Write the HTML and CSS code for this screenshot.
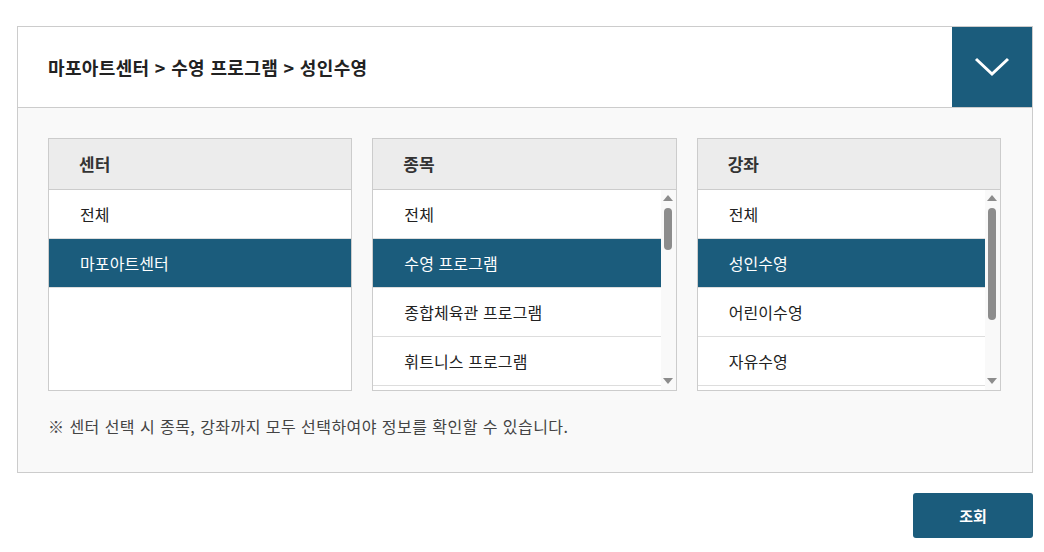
FILE: index.html
```html
<!DOCTYPE html>
<html lang="ko">
<head>
    <meta charset="UTF-8">
    <meta name="viewport" content="width=device-width, initial-scale=1.0">
    <title>강좌 선택</title>
    <link rel="stylesheet" href="styles.css">
</head>
<body>
    <div class="search-box">
        <div class="search-head">
            <h2 class="path">마포아트센터 &gt; 수영 프로그램 &gt; 성인수영</h2>
            <button type="button" class="toggle" aria-label="접기">
                <svg width="36" height="20" viewBox="0 0 36 20"><polyline points="2,2 18,17 34,2" fill="none" stroke="#fff" stroke-width="3"/></svg>
            </button>
        </div>
        <div class="search-body">
            <div class="columns">
                <div class="col">
                    <div class="col-title">센터</div>
                    <div class="list-wrap">
                        <ul class="list">
                            <li>전체</li>
                            <li class="on">마포아트센터</li>
                        </ul>
                    </div>
                </div>
                <div class="col">
                    <div class="col-title">종목</div>
                    <div class="list-wrap">
                        <ul class="list">
                            <li>전체</li>
                            <li class="on">수영 프로그램</li>
                            <li>종합체육관 프로그램</li>
                            <li>휘트니스 프로그램</li>
                        </ul>
                        <div class="scrollbar">
                            <span class="arrow-up"></span>
                            <div class="track"><div class="thumb" style="height: 42px"></div></div>
                            <span class="arrow-down"></span>
                        </div>
                    </div>
                </div>
                <div class="col">
                    <div class="col-title">강좌</div>
                    <div class="list-wrap">
                        <ul class="list">
                            <li>전체</li>
                            <li class="on">성인수영</li>
                            <li>어린이수영</li>
                            <li>자유수영</li>
                        </ul>
                        <div class="scrollbar">
                            <span class="arrow-up"></span>
                            <div class="track"><div class="thumb" style="height: 112px"></div></div>
                            <span class="arrow-down"></span>
                        </div>
                    </div>
                </div>
            </div>
            <p class="note">※ 센터 선택 시 종목, 강좌까지 모두 선택하여야 정보를 확인할 수 있습니다.</p>
        </div>
    </div>
    <div class="actions">
        <button type="button" class="btn-search">조회</button>
    </div>
</body>
</html>
```

FILE: styles.css
```css
body {
    margin: 0;
    padding: 26px 11px 0 17px;
    font-family: "Noto Sans CJK KR", "Noto Sans", sans-serif;
    color: #222;
    background: #fff;
}

.search-box {
    border: 1px solid #ccc;
}

.search-head {
    display: flex;
    justify-content: space-between;
    align-items: stretch;
    height: 80px;
    background: #fff;
    border-bottom: 1px solid #ccc;
}

.path {
    margin: 0;
    padding-left: 30px;
    align-self: center;
    font-size: 18px;
    font-weight: bold;
    letter-spacing: 0.35px;
    color: #222;
}

.toggle {
    width: 80px;
    border: none;
    padding: 0;
    background: #1b5c7c;
    display: flex;
    justify-content: center;
    align-items: center;
    cursor: pointer;
}

.search-body {
    background: #f9f9f9;
    padding: 30px 31px 34px 30px;
}

.columns {
    display: flex;
    gap: 20px;
}

.col {
    flex: 1;
    border: 1px solid #ccc;
    background: #fff;
}

.col-title {
    height: 50px;
    line-height: 50px;
    padding-left: 30px;
    background: #ececec;
    border-bottom: 1px solid #ccc;
    font-size: 17px;
    font-weight: bold;
    color: #333;
}

.list-wrap {
    display: flex;
    height: 200px;
}

.list {
    flex: 1;
    list-style: none;
    margin: 0;
    padding: 0;
    overflow: hidden;
}

.list li {
    height: 48px;
    line-height: 48px;
    padding-left: 31px;
    border-bottom: 1px solid #ddd;
    font-size: 16px;
    letter-spacing: 0.1px;
    color: #222;
    white-space: nowrap;
    cursor: pointer;
}

.list li.on {
    background: #1b5c7c;
    color: #fff;
}

/* fake scrollbar, same look as the browser one */
.scrollbar {
    width: 15px;
    display: flex;
    flex-direction: column;
    align-items: center;
    padding: 5px 0 6px;
    background: #f9f9f9;
}

.arrow-up,
.arrow-down {
    width: 0;
    height: 0;
    border-left: 5px solid transparent;
    border-right: 5px solid transparent;
}

.arrow-up {
    border-bottom: 6px solid #8c8c8c;
}

.arrow-down {
    border-top: 6px solid #8c8c8c;
}

.track {
    flex: 1;
    padding-top: 7px;
}

.thumb {
    width: 8px;
    border-radius: 4px;
    background: #8c8c8c;
}

.note {
    margin: 23px 0 0;
    font-size: 16px;
    letter-spacing: 0.45px;
    color: #444;
}

.actions {
    display: flex;
    justify-content: flex-end;
    padding-top: 20px;
}

.btn-search {
    width: 120px;
    height: 45px;
    border: none;
    border-radius: 3px;
    background: #1b5c7c;
    color: #fff;
    font-family: inherit;
    font-size: 15px;
    font-weight: bold;
    cursor: pointer;
}
```
